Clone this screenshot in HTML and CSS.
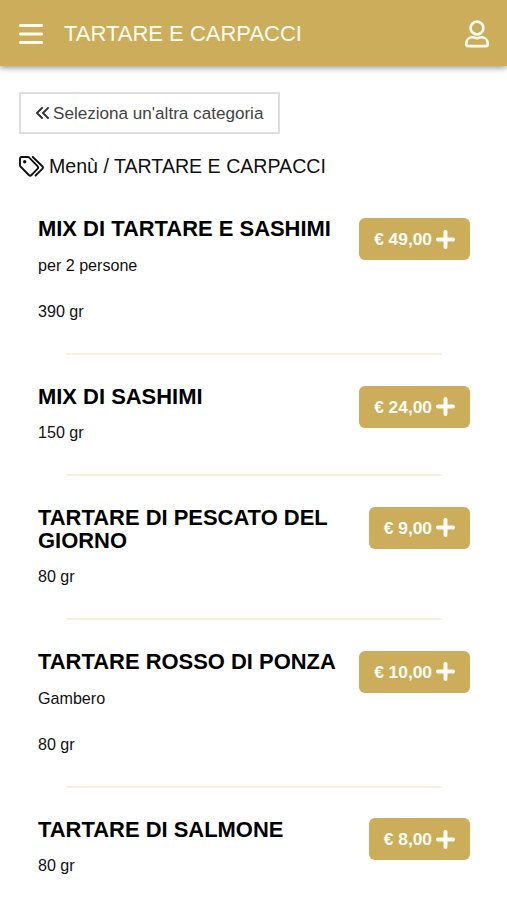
FILE: index.html
```
<!DOCTYPE html>
<html lang="it">
<head>
<meta charset="utf-8">
<meta name="viewport" content="width=device-width, initial-scale=1">
<title>TARTARE E CARPACCI</title>
<link rel="stylesheet" href="styles.css">
</head>
<body>
<svg class="defs" aria-hidden="true"><symbol id="plus" viewBox="0 0 18 18"><path d="M9 1.900v14.200M1.900 9h14.200" fill="none" stroke="currentColor" stroke-width="3.800" stroke-linecap="round"/></symbol></svg>
<header class="bar">
  <svg class="burger" viewBox="0 0 24 22"><path d="M1.400 2.500h21.200M1.400 11h21.200M1.400 19.500h21.200" fill="none" stroke="currentColor" stroke-width="2.900" stroke-linecap="round"/></svg>
  <span class="bar-title">TARTARE E CARPACCI</span>
  <svg class="user" viewBox="0 0 24 28"><g fill="none" stroke="currentColor" stroke-width="2.600" stroke-linejoin="round"><circle cx="12" cy="8" r="6.400"/><path d="M7.600 17.200c1.700 0 2.300.9 4.400.9s2.700-.9 4.400-.9c3.700 0 6.300 2.800 6.300 6.500v.7c0 1-.7 1.700-1.700 1.700H3c-1 0-1.700-.7-1.700-1.700v-.7c0-3.700 2.600-6.500 6.300-6.500z"/></g></svg>
</header>
<main>
  <a class="back"><svg class="chevrons" viewBox="0 0 13 12"><path d="M6 1 1 6l5 5M12 1 7 6l5 5" fill="none" stroke="currentColor" stroke-width="1.900" stroke-linecap="round" stroke-linejoin="round"/></svg><span class="back-text">Seleziona un'altra categoria</span></a>
  <div class="crumb"><svg class="tags" viewBox="0 0 25 21"><g fill="none" stroke="currentColor" stroke-width="1.900" stroke-linejoin="round" stroke-linecap="round"><path d="M1 2.500v6.700c0 .5.2 1 .5 1.300l8.300 8.500c.8.800 1.900.8 2.700 0l6-6.200c.8-.8.8-1.900 0-2.700L10.200 1.600C9.900 1.200 9.400 1 8.900 1H2.500C1.700 1 1 1.700 1 2.500z"/><path d="M13.800 1l9.500 9.200c.8.8.8 1.800 0 2.600L16.600 19.500"/></g><circle cx="5.700" cy="5.700" r="1.700" fill="currentColor"/></svg><span class="crumb-text">Menù / TARTARE E CARPACCI</span></div>
  <section class="list">
    <article class="dish"><div class="row"><div class="info"><h2>MIX DI TARTARE E SASHIMI</h2><p>per 2 persone<br><br>390 gr</p></div><button><span>€ 49,00</span><svg class="plus"><use href="#plus"/></svg></button></div><hr></article>
    <article class="dish"><div class="row"><div class="info"><h2>MIX DI SASHIMI</h2><p>150 gr</p></div><button><span>€ 24,00</span><svg class="plus"><use href="#plus"/></svg></button></div><hr></article>
    <article class="dish"><div class="row"><div class="info"><h2>TARTARE DI PESCATO DEL GIORNO</h2><p>80 gr</p></div><button><span>€ 9,00</span><svg class="plus"><use href="#plus"/></svg></button></div><hr></article>
    <article class="dish"><div class="row"><div class="info"><h2>TARTARE ROSSO DI PONZA</h2><p>Gambero<br><br>80 gr</p></div><button><span>€ 10,00</span><svg class="plus"><use href="#plus"/></svg></button></div><hr></article>
    <article class="dish"><div class="row"><div class="info"><h2>TARTARE DI SALMONE</h2><p>80 gr</p></div><button><span>€ 8,00</span><svg class="plus"><use href="#plus"/></svg></button></div></article>
  </section>
</main>
</body>
</html>
```
FILE: styles.css
```
* { box-sizing: border-box; }
html, body { height: 100%; overflow: hidden; }
body { margin: 0; background: #fff; color: #111; font-family: "Liberation Sans", Arial, sans-serif; font-size: 16px; }
svg { display: block; flex: none; }
.defs { display: none; }
.bar { height: 66px; padding: 1px 18px 0 19px; display: flex; align-items: center; background: #cbad5b; color: #fffcf0; box-shadow: 0 2px 6px rgba(0,0,0,.4); }
.burger { width: 24px; height: 22px; }
.bar-title { margin-left: 21px; font-size: 22px; line-height: 26px; white-space: nowrap; }
.user { width: 24px; height: 28px; margin-left: auto; }
main { padding: 26px 19px 0; }
.back { width: 261px; height: 42px; display: flex; align-items: center; padding-left: 15px; border: 2px solid #dcdfdf; color: #444; }
.chevrons { width: 13px; height: 12px; color: #333; }
.back-text { margin-left: 4px; padding-top: 2px; font-size: 17.1px; white-space: nowrap; }
.crumb { height: 24px; margin-top: 20px; display: flex; align-items: center; }
.tags { width: 25px; height: 21px; }
.crumb-text { margin-left: 5px; font-size: 19.600px; white-space: nowrap; }
.list { padding: 40px 18px 0 19px; }
.dish { margin-bottom: 30.800px; }
.row { display: flex; justify-content: space-between; align-items: flex-start; }
.info { width: 308px; margin-top: -.6px; }
h2 { margin: 0; font-size: 21.950px; line-height: 23.200px; color: #000; }
p { margin: 13px 0 0; font-size: 16.100px; line-height: 23.200px; }
button { height: 42px; padding: 0 15px; display: flex; align-items: center; gap: 4px; border: 0; border-radius: 6px; background: #cbad5b; color: #fffdf5; font: bold 17.350px "Liberation Sans", Arial, sans-serif; white-space: nowrap; }
button span { padding-top: 1px; }
.plus { width: 19px; height: 19px; }
hr { height: 2px; margin: 29.500px 28px 0; border: 0; background: #f5f2e3; }
```
